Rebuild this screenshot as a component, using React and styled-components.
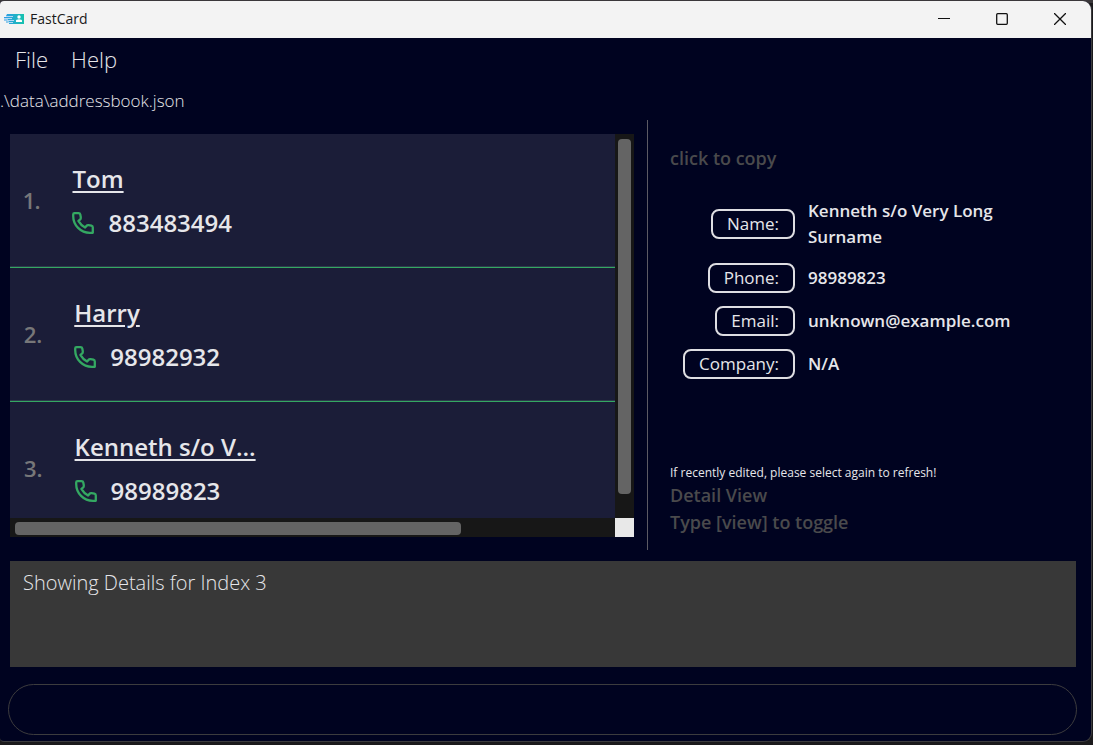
import React, { useState } from 'react';
import styled, { createGlobalStyle } from 'styled-components';

const GlobalStyle = createGlobalStyle`
  * { box-sizing: border-box; }
  body {
    margin: 0;
    background: #1b1a1c;
    color: #e6e6ea;
    font-family: 'Open Sans', 'Noto Sans', sans-serif;
  }
  button, input { font-family: inherit; color: inherit; }
`;

const Desktop = styled.div`
  display: flex;
  height: 100vh;
  min-height: 600px;
  padding: 1px 1px 3px 0;
  background: linear-gradient(#3a373a 0 3px, #1b1a1c 3px);
`;

const Window = styled.div`
  flex: 1;
  min-width: 0;
  display: flex;
  flex-direction: column;
  overflow: hidden;
  border: solid #3c3c3e;
  border-width: 0 1px 1px 0;
  border-radius: 4px 9px 9px 4px;
  background: #000320;
`;

const TitleBar = styled.header`
  flex: none;
  display: flex;
  align-items: center;
  height: 37px;
  padding: 0 2px 1px 4px;
  background: #f3f3f3;
  color: #1a1a1a;
`;

const Title = styled.h1`
  flex: 1;
  margin: 0 0 0 6px;
  font-size: 14px;
  font-weight: 400;
  line-height: 20px;
`;

const WindowButton = styled.button`
  display: flex;
  align-items: center;
  justify-content: center;
  width: 58px;
  height: 36px;
  padding: 0;
  border: 0;
  background: transparent;
`;

const MenuBar = styled.nav`
  flex: none;
  display: flex;
  gap: 23px;
  padding: 6px 15px 8px;
`;

const MenuButton = styled.button`
  padding: 0;
  border: 0;
  background: transparent;
  font-size: 22px;
  font-weight: 300;
  line-height: 30px;
`;

const FilePath = styled.p`
  flex: none;
  margin: 0;
  padding: 6px 0 7px;
  font-size: 17px;
  font-weight: 300;
  line-height: 25px;
`;

const Panes = styled.main`
  flex: 1;
  min-height: 0;
  display: grid;
  grid-template-columns: minmax(0, 647fr) minmax(0, 444fr);
`;

const ListPane = styled.section`
  min-height: 0;
  padding: 14px 13px 13px 10px;
`;

const ListFrame = styled.div`
  height: 100%;
  display: grid;
  grid-template-columns: minmax(0, 1fr) 19px;
  grid-template-rows: minmax(0, 1fr) 19px;
  background: #171717;
`;

const PersonList = styled.ol`
  margin: 0;
  padding: 0;
  overflow: hidden;
  list-style: none;
  background: #1b1d38;
`;

const PersonCard = styled.li`
  display: flex;
  align-items: center;
  gap: 32px;
  height: 134px;
  padding: 0 14px;
  border-bottom: 1px solid #34a862;
  box-shadow: inset 0 -1px #2d3b4c;
`;

const Index = styled.span`
  padding-bottom: 2px;
  color: #777779;
  font-size: 22px;
  font-weight: 600;
  line-height: 30px;
  font-variant-numeric: proportional-nums;
`;

const PersonText = styled.div`
  display: flex;
  flex-direction: column;
  gap: 8px;
  font-size: 24px;
  font-weight: 600;
  line-height: 36px;
`;

const PersonName = styled.span`
  text-decoration: underline;
  text-decoration-thickness: 2px;
  text-underline-offset: 3px;
`;

const PersonPhone = styled.span`
  display: flex;
  align-items: center;
  gap: 14px;
`;

const VerticalTrack = styled.div`
  padding: 5px 3px;
`;

const HorizontalTrack = styled.div`
  padding: 4px 5px 2px;
`;

const VerticalThumb = styled.div`
  height: 95%;
  border-radius: 4px;
  background: #646464;
`;

const HorizontalThumb = styled.div`
  width: 75%;
  height: 13px;
  border-radius: 4px;
  background: #646464;
`;

const Corner = styled.div`
  background: #e8e8e8;
`;

const DetailPane = styled.section`
  display: flex;
  flex-direction: column;
  padding: 25px 22px 14px;
  border-left: 1px solid #5c5b64;
`;

const Hint = styled.p`
  margin: 0;
  color: #4a4a4c;
  font-size: 18px;
  font-weight: 600;
  line-height: 27px;
`;

const Note = styled.p`
  margin: auto 0 0;
  font-size: 12px;
  font-weight: 500;
  line-height: 19px;
`;

const Details = styled.dl`
  display: grid;
  grid-template-columns: 125px minmax(0, 240px);
  align-items: center;
  gap: 13px;
  margin: 26px 0 0;
`;

const DetailLabel = styled.dt`
  display: flex;
  justify-content: flex-end;
`;

const CopyButton = styled.button`
  height: 30px;
  padding: 0 14px;
  border: 2px solid #dedee2;
  border-radius: 8px;
  background: transparent;
  font-size: 17px;
  line-height: 26px;
`;

const DetailValue = styled.dd`
  margin: 0;
  font-size: 17px;
  font-weight: 600;
  line-height: 26px;
`;

const ResultBox = styled.output`
  flex: none;
  display: block;
  height: 106px;
  margin: 11px 15px 17px 10px;
  padding: 7px 13px;
  background: #383838;
  font-size: 20px;
  font-weight: 300;
  line-height: 30px;
`;

const CommandInput = styled.input`
  flex: none;
  height: 51px;
  margin: 0 14px 6px 8px;
  padding: 0 24px;
  border: 1px solid #3c3c3e;
  border-radius: 26px;
  outline: 0;
  background: transparent;
  font-size: 20px;
`;

const people = [
  { name: 'Tom', phone: '883483494' },
  { name: 'Harry', phone: '98982932' },
  { name: 'Kenneth s/o V...', phone: '98989823' },
];

const details = [
  ['Name:', 'Kenneth s/o Very Long Surname'],
  ['Phone:', '98989823'],
  ['Email:', 'unknown@example.com'],
  ['Company:', 'N/A'],
];

const Logo = () => (
  <svg width="20" height="12" viewBox="0 0 20 12" aria-hidden="true">
    <defs>
      <linearGradient id="card" x1="0" x2="1">
        <stop offset="0" stopColor="#2f9bea" />
        <stop offset="1" stopColor="#16c2ad" />
      </linearGradient>
    </defs>
    <path d="M3 1H20V11H5V9.500H2V8.500H5V7.500H0V6.500H4V5.500H0V4H4V3H2Z" fill="url(#card)" />
    <path d="M2 3.500H9M0 5.500H8M3 7.500H10M4 9.500H9" stroke="#b5d9f3" strokeWidth="1" />
    <circle cx="15" cy="4" r="1.700" fill="#fff" />
    <path d="M12 9V7.800Q12 6.300 15 6.300T18 7.800V9Z" fill="#fff" />
  </svg>
);

const PhoneIcon = () => (
  <svg width="22" height="22" viewBox="0 0 22 22" fill="none" stroke="#34a862" strokeWidth="2.300" strokeLinejoin="round" aria-hidden="true">
    <path d="M2.500 1.200H6.500Q8 1.200 8.300 2.600L8.800 5.300Q9 6.800 8 7.600L6.400 8.900Q8.800 13.200 13.100 15.600L14.400 14Q15.200 13 16.500 13.200L19.400 13.700Q20.800 14 20.800 15.500V20.800H18C8.600 20.800 1.200 13.400 1.200 4V2.500Q1.200 1.200 2.500 1.200Z" />
  </svg>
);

export default function App() {
  const [command, setCommand] = useState('');
  return (
    <>
      <GlobalStyle />
      <Desktop>
        <Window>
          <TitleBar>
            <Logo />
            <Title>FastCard</Title>
            <WindowButton aria-label="Minimize">
              <svg width="12" height="12" stroke="#111"><path d="M0 5.500H12" /></svg>
            </WindowButton>
            <WindowButton aria-label="Maximize">
              <svg width="12" height="12" fill="none" stroke="#111" strokeWidth="1.300"><rect x="0.700" y="0.700" width="10.600" height="10.600" rx="1" /></svg>
            </WindowButton>
            <WindowButton aria-label="Close">
              <svg width="12" height="12" stroke="#111" strokeWidth="1.300"><path d="M0 0L12 12M12 0L0 12" /></svg>
            </WindowButton>
          </TitleBar>
          <MenuBar>
            <MenuButton>File</MenuButton>
            <MenuButton>Help</MenuButton>
          </MenuBar>
          <FilePath>.\data\addressbook.json</FilePath>
          <Panes>
            <ListPane>
              <ListFrame>
                <PersonList>
                  {people.map((person, i) => (
                    <PersonCard key={person.name}>
                      <Index>{i + 1}.</Index>
                      <PersonText>
                        <PersonName>{person.name}</PersonName>
                        <PersonPhone><PhoneIcon />{person.phone}</PersonPhone>
                      </PersonText>
                    </PersonCard>
                  ))}
                </PersonList>
                <VerticalTrack><VerticalThumb /></VerticalTrack>
                <HorizontalTrack><HorizontalThumb /></HorizontalTrack>
                <Corner />
              </ListFrame>
            </ListPane>
            <DetailPane>
              <Hint>click to copy</Hint>
              <Details>
                {details.map(([label, value]) => (
                  <React.Fragment key={label}>
                    <DetailLabel>
                      <CopyButton onClick={() => navigator.clipboard?.writeText(value)}>{label}</CopyButton>
                    </DetailLabel>
                    <DetailValue>{value}</DetailValue>
                  </React.Fragment>
                ))}
              </Details>
              <Note>If recently edited, please select again to refresh!</Note>
              <Hint>Detail View</Hint>
              <Hint>Type [view] to toggle</Hint>
            </DetailPane>
          </Panes>
          <ResultBox>Showing Details for Index 3</ResultBox>
          <CommandInput aria-label="Command" value={command} onChange={(e) => setCommand(e.target.value)} />
        </Window>
      </Desktop>
    </>
  );
}
